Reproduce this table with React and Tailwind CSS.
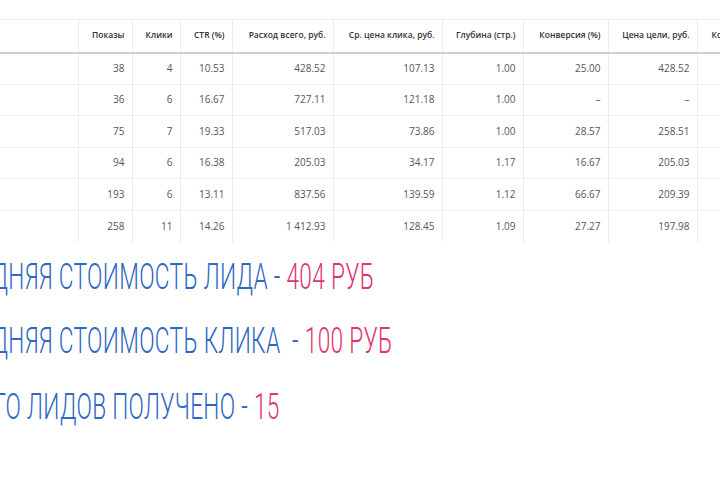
import React from "react";

const cols = [
  { title: "", w: "w-[78px]" },
  { title: "Показы", w: "w-[54px]" },
  { title: "Клики", w: "w-[48px]" },
  { title: "CTR (%)", w: "w-[52px]" },
  { title: "Расход всего, руб.", w: "w-[101px]" },
  { title: "Ср. цена клика, руб.", w: "w-[109px]" },
  { title: "Глубина (стр.)", w: "w-[81px]" },
  { title: "Конверсия (%)", w: "w-[85px]" },
  { title: "Цена цели, руб.", w: "w-[89px]" },
  { title: "Конверсии", w: "w-[90px]", left: true },
];

const rows = [
  ["38", "4", "10.53", "428.52", "107.13", "1.00", "25.00", "428.52"],
  ["36", "6", "16.67", "727.11", "121.18", "1.00", "–", "–"],
  ["75", "7", "19.33", "517.03", "73.86", "1.00", "28.57", "258.51"],
  ["94", "6", "16.38", "205.03", "34.17", "1.17", "16.67", "205.03"],
  ["193", "6", "13.11", "837.56", "139.59", "1.12", "66.67", "209.39"],
  ["258", "11", "14.26", "1 412.93", "128.45", "1.09", "27.27", "197.98"],
];

function Line({ label, value, shift, gap, h }) {
  return (
    <div className={`${h} overflow-hidden whitespace-nowrap`}>
      <span
        className={`inline-block origin-left scale-x-[0.63] font-light text-[36px] leading-[66px] tracking-[0.5px] ${shift}`}
        style={{ fontFamily: "Roboto, sans-serif" }}
      >
        <span className="text-[#2f67c3]">{label}</span>
        <span className="text-[#2f67c3]">{gap}- </span>
        <span className="text-[#e0336e]">{value}</span>
      </span>
    </div>
  );
}

export default function App() {
  return (
    <div className="w-[720px] h-[480px] overflow-hidden bg-white">
      <div className="pt-[19px] w-[720px] overflow-hidden">
        <table
          className="table-fixed border-collapse w-[787px] text-[10px]"
          style={{ fontFamily: "'Open Sans', sans-serif" }}
        >
          <thead>
            <tr className="h-[33px] border-t border-[#ececec] border-b-2 border-b-[#cfcfcf]">
              {cols.map((c, i) => (
                <th
                  key={i}
                  className={`${c.w} ${i > 0 ? "border-l border-[#ececec]" : ""} ${c.left ? "text-left pl-[14px]" : "text-right pr-[7px]"} font-semibold text-[8.5px] text-[#333]`}
                >
                  {c.title}
                </th>
              ))}
            </tr>
          </thead>
          <tbody>
            {rows.map((r, ri) => (
              <tr key={ri} className="h-[31.5px] border-b border-[#f0f0f0] last:border-b-0">
                <td></td>
                {r.map((v, i) => (
                  <td key={i} className="border-l border-[#ececec] text-right pr-[7px] text-[#555]">
                    {v}
                  </td>
                ))}
                <td className="border-l border-[#ececec]"></td>
              </tr>
            ))}
          </tbody>
        </table>
      </div>
      <div className="pt-[2px]">
        <Line h="h-[64px]" label="СРЕДНЯЯ СТОИМОСТЬ ЛИДА " value="404 РУБ" shift="-translate-x-[51px]" gap="" />
        <Line h="h-[66px]" label="СРЕДНЯЯ СТОИМОСТЬ КЛИКА " value="100 РУБ" shift="-translate-x-[51px]" gap={"\u00a0"} />
        <Line h="h-[66px]" label="ВСЕГО ЛИДОВ ПОЛУЧЕНО " value="15" shift="-translate-x-[49px]" gap="" />
      </div>
    </div>
  );
}
